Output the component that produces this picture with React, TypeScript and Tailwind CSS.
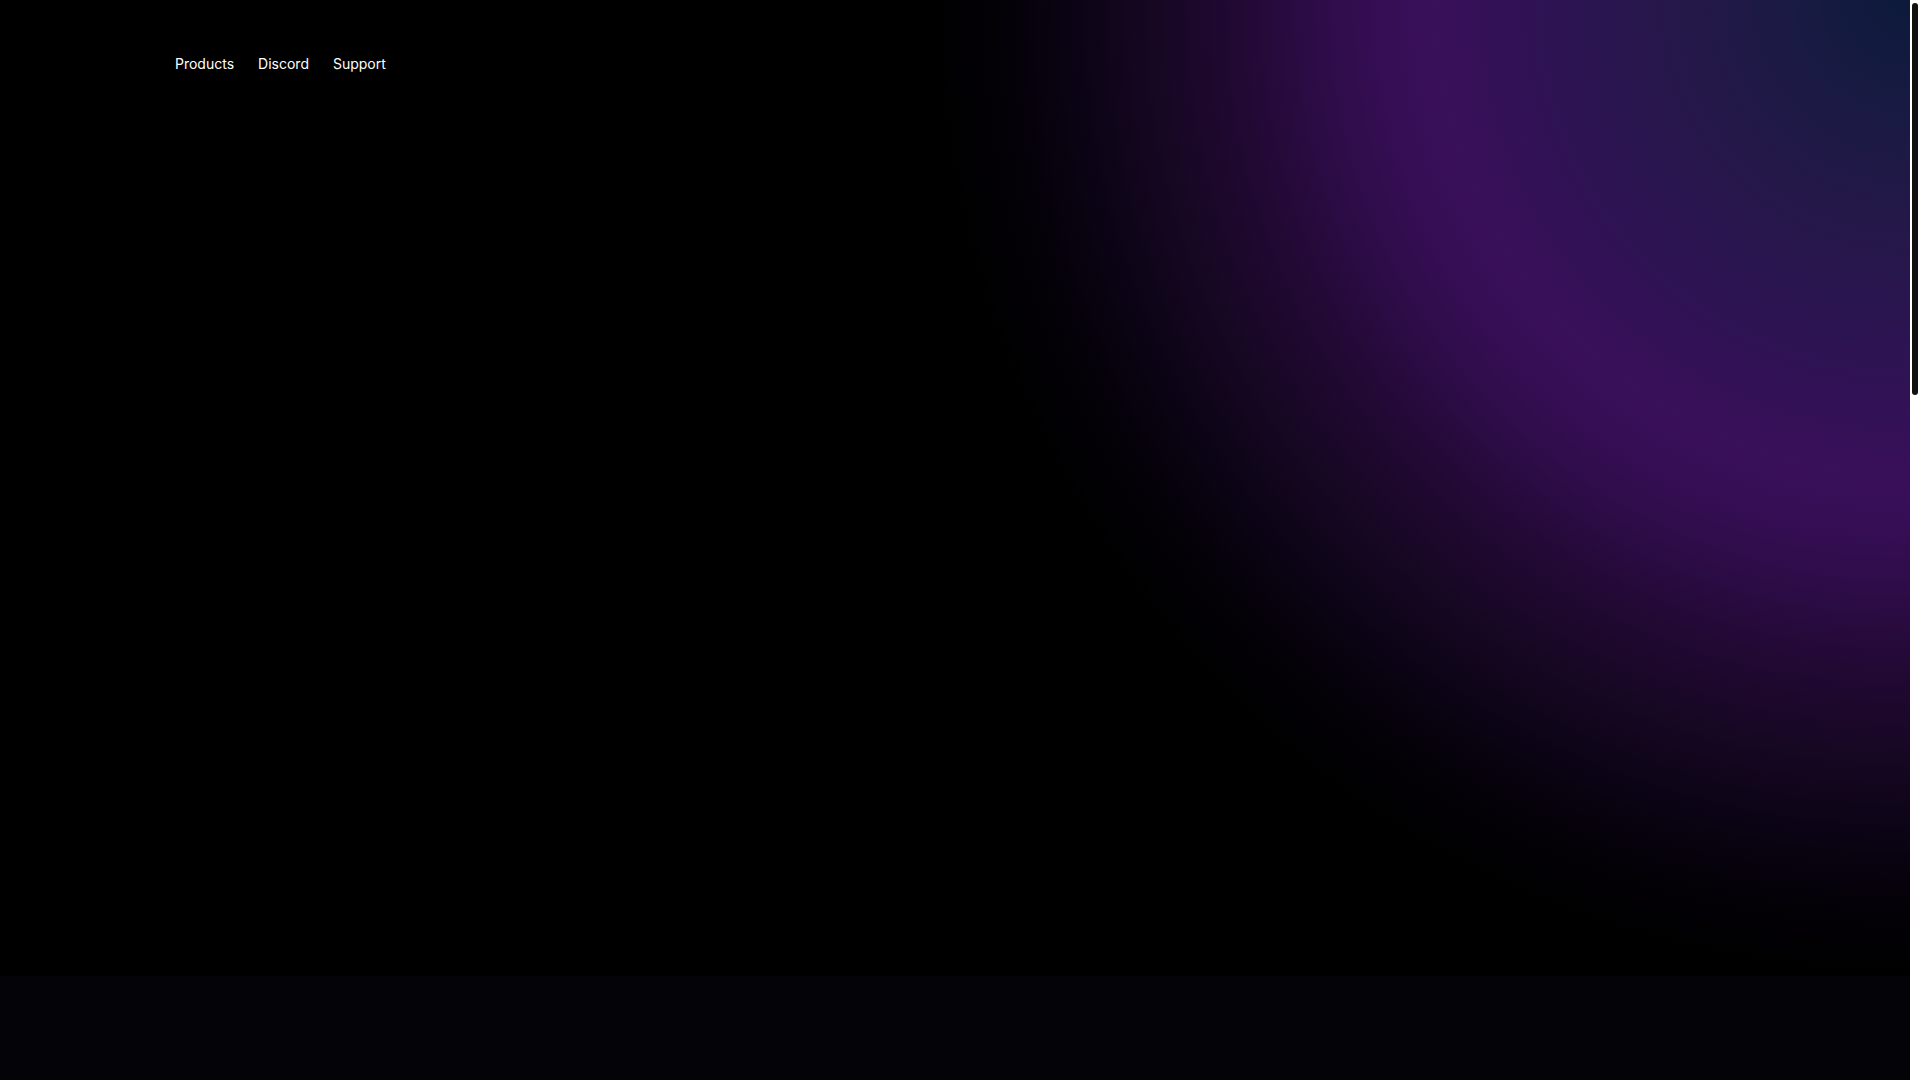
export default function App() {
  return (
    <div className="min-h-screen bg-black text-white [font-family:Inter,'Noto_Sans',sans-serif]">
      <section className="relative h-[976px] overflow-hidden bg-black">
        {/* glow ring from the top-right corner */}
        <div className="absolute inset-0 bg-[radial-gradient(circle_at_calc(100%_-_10px)_0,#0c1a3a_0px,#1a1a44_120px,#241848_220px,#2c1452_340px,#390f5a_480px,#360e56_520px,#2e0c48_590px,#220934_670px,#160722_760px,#0c0416_830px,#040108_900px,#000_980px)]" />
        <header className="relative flex h-32 items-center pl-[175px]">
          <nav className="flex items-center gap-6 text-sm text-white">
            <a href="#products">Products</a>
            <a href="#discord">Discord</a>
            <a href="#support">Support</a>
          </nav>
        </header>
      </section>
      <section className="h-[1969px] bg-[#040408]" />

      {/* scrollbar */}
      <div className="fixed right-0 top-0 h-screen w-[10px] bg-white">
        <div className="absolute left-[2px] top-[3px] h-[392px] w-[6px] rounded-full bg-[#111111]" />
      </div>
    </div>
  );
}
